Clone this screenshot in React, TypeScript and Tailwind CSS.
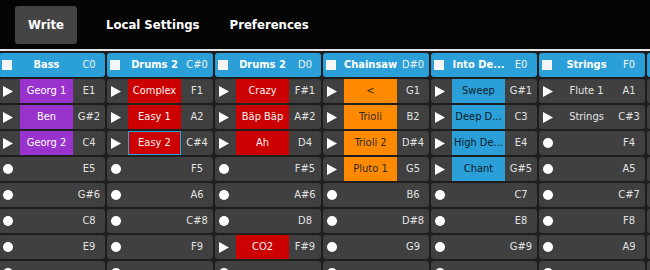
import React from "react";

type Cell = {
  kind: "play" | "rec";
  clip?: string;
  note: string;
  selected?: boolean;
};

type Track = {
  name: string;
  note: string;
  clipBg: string;
  clipText: string;
  cells: Cell[];
};

const font = { fontFamily: '"DejaVu Sans Condensed", "DejaVu Sans", Verdana, sans-serif' };

const rec = (note: string): Cell => ({ kind: "rec", note });
const play = (clip: string, note: string, selected = false): Cell => ({ kind: "play", clip, note, selected });

// last row is only a few pixels tall in the view, its note labels fall below the edge
const tracks: Track[] = [
  {
    name: "Bass",
    note: "C0",
    clipBg: "bg-[#9a32cd]",
    clipText: "text-white",
    cells: [play("Georg 1", "E1"), play("Ben", "G#2"), play("Georg 2", "C4"), rec("E5"), rec("G#6"), rec("C8"), rec("E9"), rec("")],
  },
  {
    name: "Drums 2",
    note: "C#0",
    clipBg: "bg-[#cc0000]",
    clipText: "text-[#f4f4f4]",
    cells: [play("Complex", "F1"), play("Easy 1", "A2"), play("Easy 2", "C#4", true), rec("F5"), rec("A6"), rec("C#8"), rec("F9"), rec("")],
  },
  {
    name: "Drums 2",
    note: "D0",
    clipBg: "bg-[#cc0000]",
    clipText: "text-[#f4f4f4]",
    cells: [play("Crazy", "F#1"), play("Bäp Bäp", "A#2"), play("Ah", "D4"), rec("F#5"), rec("A#6"), rec("D8"), play("CO2", "F#9"), rec("")],
  },
  {
    name: "Chainsaw",
    note: "D#0",
    clipBg: "bg-[#ff8a00]",
    clipText: "text-[#2a2a2a]",
    cells: [play("<", "G1"), play("Trioli", "B2"), play("Trioli 2", "D#4"), play("Pluto 1", "G5"), rec("B6"), rec("D#8"), rec("G9"), rec("")],
  },
  {
    name: "Into De...",
    note: "E0",
    clipBg: "bg-[#2b9fd8]",
    clipText: "text-[#0c1c28]",
    cells: [play("Sweep", "G#1"), play("Deep D...", "C3"), play("High De...", "E4"), play("Chant", "G#5"), rec("C7"), rec("E8"), rec("G#9"), rec("")],
  },
  {
    name: "Strings",
    note: "F0",
    clipBg: "bg-transparent",
    clipText: "text-[#e6e6e6]",
    cells: [play("Flute 1", "A1"), play("Strings", "C#3"), rec("F4"), rec("A5"), rec("C#7"), rec("F8"), rec("A9"), rec("")],
  },
  {
    name: "",
    note: "",
    clipBg: "bg-transparent",
    clipText: "text-[#e6e6e6]",
    cells: [rec(""), rec(""), rec(""), rec(""), rec(""), rec(""), rec(""), rec("")],
  },
];

const PlayIcon = () => (
  <svg width="10" height="11" viewBox="0 0 10 11" className="block">
    <polygon points="0,0 10,5.5 0,11" fill="#ffffff" />
  </svg>
);

const RecIcon = () => <div className="w-[10px] h-[10px] rounded-full bg-white" />;

const TrackColumn = ({ track }: { track: Track }) => (
  <div className="w-[106px] shrink-0 flex flex-col gap-[2px]">
    <div className="h-[24px] flex items-center rounded-[3px] bg-[#2b9fd8] text-white font-bold">
      <div className="w-[21px] pl-[3px] flex items-center">
        <div className="w-[10px] h-[10px] bg-[#f6f6f6]" />
      </div>
      <div className="w-[53px] text-center whitespace-nowrap overflow-hidden">{track.name}</div>
      <div className="flex-1 text-center font-normal text-[#f2f2f2]">{track.note}</div>
    </div>
    {track.cells.map((c, i) => (
      <div key={i} className="h-[24px] flex items-stretch rounded-[3px] bg-[#404040] text-[#e2e2e2]">
        <div className="w-[21px] pl-[4px] flex items-center">
          {c.kind === "play" ? <PlayIcon /> : <RecIcon />}
        </div>
        <div
          className={
            "w-[53px] flex items-center justify-center whitespace-nowrap overflow-hidden " +
            (c.clip !== undefined ? track.clipBg + " " + track.clipText : "") +
            (c.selected ? " border border-[#2ea3dc]" : "")
          }
        >
          {c.clip}
        </div>
        <div className="flex-1 flex items-center justify-center">{c.note}</div>
      </div>
    ))}
  </div>
);

export default function App() {
  return (
    <div className="w-[650px] h-[270px] overflow-hidden bg-[#1e1e1e]" style={font}>
      <nav className="h-[49px] bg-[#050505] flex items-center pl-[15px] text-[13px] font-bold text-white">
        <div className="h-[38px] px-[13px] flex items-center rounded-[3px] bg-[#444444]">Write</div>
        <div className="ml-[29px]">Local Settings</div>
        <div className="ml-[30px]">Preferences</div>
      </nav>
      <div className="h-[2px] bg-[#e4e4e4]" />
      <div className="flex gap-[2px] pt-[2px] -ml-[1px] text-[11px]">
        {tracks.map((t, i) => (
          <TrackColumn key={i} track={t} />
        ))}
      </div>
    </div>
  );
}
